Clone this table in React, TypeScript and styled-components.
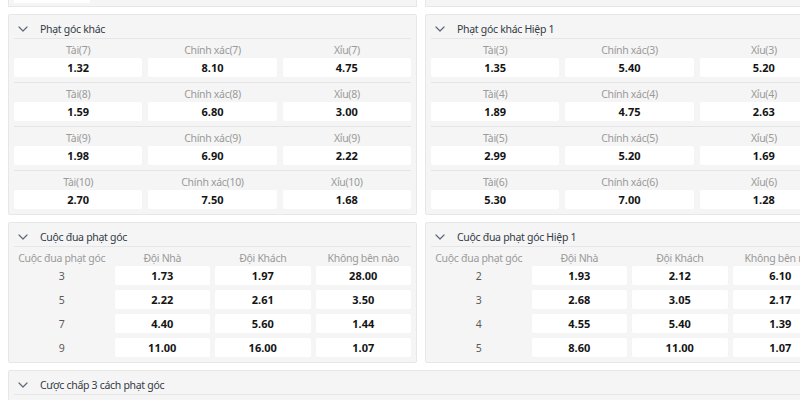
import React from "react";
import styled, { createGlobalStyle } from "styled-components";

const GlobalStyle = createGlobalStyle`
  html, body { margin: 0; padding: 0; background: #ffffff; overflow: hidden; }
  body { font-family: "Noto Sans", "Open Sans", Arial, sans-serif; }
`;

const Page = styled.div`
  width: 826px;
  padding-left: 8px;
  display: flex;
  flex-direction: column;
  gap: 7px;
`;

const TwoCols = styled.div`
  display: grid;
  grid-template-columns: 409px 409px;
  column-gap: 8px;
  align-items: start;
`;

const Panel = styled.section`
  background: #f5f5f5;
  border: 1px solid #e7e7e7;
  border-radius: 2px;
  padding: 0 5px;
  box-sizing: border-box;
`;

const StubPanel = styled.div`
  background: #f5f5f5;
  border: 1px solid #e7e7e7;
  border-top: none;
  height: 6px;
  padding: 0 5px;
`;

const StubCell = styled.div`
  width: 76px;
  height: 3px;
  background: #ffffff;
`;

const Header = styled.div`
  height: 24px;
  display: flex;
  align-items: center;
  gap: 12px;
  padding-left: 4px;
  padding-top: 4px;
  box-sizing: border-box;
  border-bottom: 1px solid #e6e6e6;
`;

const Title = styled.span`
  font-size: 10.5px;
  letter-spacing: -0.3px;
  color: #333b45;
`;

const OURow = styled.div<{ $first?: boolean }>`
  display: grid;
  grid-template-columns: repeat(3, 1fr);
  column-gap: 6px;
  padding-bottom: 5px;
  border-top: ${(p) => (p.$first ? "none" : "1px solid #e4e4e4")};
`;

const OUCol = styled.div`
  display: flex;
  flex-direction: column;
`;

const Label = styled.div`
  height: 19px;
  display: flex;
  align-items: center;
  justify-content: center;
  padding-top: 2px;
  box-sizing: border-box;
  font-size: 10.5px;
  letter-spacing: -0.3px;
  color: #9a9a9a;
  white-space: nowrap;
`;

const Cell = styled.div`
  height: 19px;
  display: flex;
  align-items: center;
  justify-content: center;
  background: #ffffff;
  border-radius: 2px;
  font-size: 11px;
  font-weight: 700;
  color: #141414;
`;

const RaceHeadRow = styled.div`
  display: grid;
  grid-template-columns: repeat(4, 1fr);
  column-gap: 5px;
`;

const RaceBody = styled.div`
  display: grid;
  grid-template-columns: repeat(4, 1fr);
  column-gap: 5px;
  row-gap: 5px;
  padding-bottom: 5px;
`;

const RaceLine = styled.div`
  height: 19px;
  display: flex;
  align-items: center;
  justify-content: center;
  font-size: 10.5px;
  color: #5a5a5a;
`;

const Chevron = () => (
  <svg width="10" height="6" viewBox="0 0 10 6" aria-hidden="true">
    <polyline points="1,1 5,5 9,1" fill="none" stroke="#5d6b79" strokeWidth="1.2" strokeLinecap="round" strokeLinejoin="round" />
  </svg>
);

type OUData = [string, string][][];

const ouLeft: OUData = [
  [["Tài(7)", "1.32"], ["Chính xác(7)", "8.10"], ["Xỉu(7)", "4.75"]],
  [["Tài(8)", "1.59"], ["Chính xác(8)", "6.80"], ["Xỉu(8)", "3.00"]],
  [["Tài(9)", "1.98"], ["Chính xác(9)", "6.90"], ["Xỉu(9)", "2.22"]],
  [["Tài(10)", "2.70"], ["Chính xác(10)", "7.50"], ["Xỉu(10)", "1.68"]],
];

const ouRight: OUData = [
  [["Tài(3)", "1.35"], ["Chính xác(3)", "5.40"], ["Xỉu(3)", "5.20"]],
  [["Tài(4)", "1.89"], ["Chính xác(4)", "4.75"], ["Xỉu(4)", "2.63"]],
  [["Tài(5)", "2.99"], ["Chính xác(5)", "5.20"], ["Xỉu(5)", "1.69"]],
  [["Tài(6)", "5.30"], ["Chính xác(6)", "7.00"], ["Xỉu(6)", "1.28"]],
];

const raceLeft = [
  ["3", "1.73", "1.97", "28.00"],
  ["5", "2.22", "2.61", "3.50"],
  ["7", "4.40", "5.60", "1.44"],
  ["9", "11.00", "16.00", "1.07"],
];

const raceRight = [
  ["2", "1.93", "2.12", "6.10"],
  ["3", "2.68", "3.05", "2.17"],
  ["4", "4.55", "5.40", "1.39"],
  ["5", "8.60", "11.00", "1.07"],
];

const PanelHeader = ({ title }: { title: string }) => (
  <Header>
    <Chevron />
    <Title>{title}</Title>
  </Header>
);

const OUPanel = ({ title, data }: { title: string; data: OUData }) => (
  <Panel>
    <PanelHeader title={title} />
    {data.map((row, i) => (
      <OURow key={i} $first={i === 0}>
        {row.map(([label, value]) => (
          <OUCol key={label}>
            <Label>{label}</Label>
            <Cell>{value}</Cell>
          </OUCol>
        ))}
      </OURow>
    ))}
  </Panel>
);

const RacePanel = ({ title, data }: { title: string; data: string[][] }) => (
  <Panel>
    <PanelHeader title={title} />
    <RaceHeadRow>
      <Label>Cuộc đua phạt góc</Label>
      <Label>Đội Nhà</Label>
      <Label>Đội Khách</Label>
      <Label>Không bên nào</Label>
    </RaceHeadRow>
    <RaceBody>
      {data.map((row) => (
        <React.Fragment key={row[0]}>
          <RaceLine>{row[0]}</RaceLine>
          <Cell>{row[1]}</Cell>
          <Cell>{row[2]}</Cell>
          <Cell>{row[3]}</Cell>
        </React.Fragment>
      ))}
    </RaceBody>
  </Panel>
);

const WidePanel = styled(Panel)`
  height: 60px;
`;

export default function App() {
  return (
    <>
      <GlobalStyle />
      <Page>
        <TwoCols>
          <StubPanel>
            <StubCell />
          </StubPanel>
          <StubPanel />
        </TwoCols>
        <TwoCols>
          <OUPanel title="Phạt góc khác" data={ouLeft} />
          <OUPanel title="Phạt góc khác Hiệp 1" data={ouRight} />
        </TwoCols>
        <TwoCols>
          <RacePanel title="Cuộc đua phạt góc" data={raceLeft} />
          <RacePanel title="Cuộc đua phạt góc Hiệp 1" data={raceRight} />
        </TwoCols>
        <WidePanel>
          <PanelHeader title="Cược chấp 3 cách phạt góc" />
        </WidePanel>
      </Page>
    </>
  );
}
